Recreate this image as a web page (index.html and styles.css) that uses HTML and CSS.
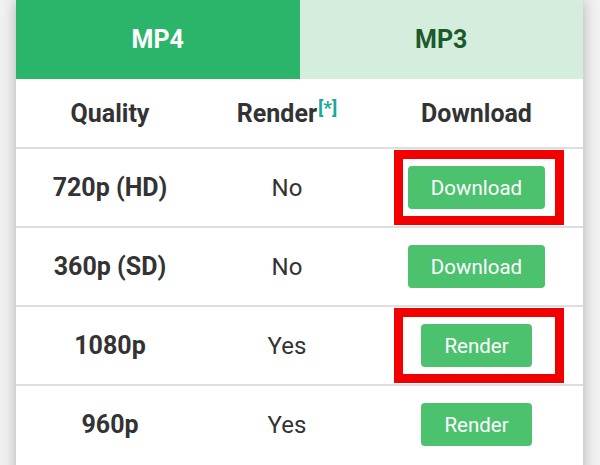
FILE: index.html
```html
<!DOCTYPE html>
<html>
<head>
<meta charset="utf-8">
<link rel="stylesheet" href="styles.css">
</head>
<body>
<div class="page">
  <div class="card">
    <div class="tabs">
      <div class="tab active">MP4</div>
      <div class="tab">MP3</div>
    </div>
    <div class="row head">
      <div class="cell">Quality</div>
      <div class="cell">Render<sup class="note">[*]</sup></div>
      <div class="cell">Download</div>
    </div>
    <div class="row">
      <div class="cell q">720p (HD)</div>
      <div class="cell r">No</div>
      <div class="cell d"><span class="btn">Download</span><span class="mark"></span></div>
    </div>
    <div class="row">
      <div class="cell q">360p (SD)</div>
      <div class="cell r">No</div>
      <div class="cell d"><span class="btn">Download</span></div>
    </div>
    <div class="row">
      <div class="cell q">1080p</div>
      <div class="cell r">Yes</div>
      <div class="cell d"><span class="btn">Render</span><span class="mark"></span></div>
    </div>
    <div class="row">
      <div class="cell q">960p</div>
      <div class="cell r">Yes</div>
      <div class="cell d"><span class="btn">Render</span></div>
    </div>
  </div>
</div>
</body>
</html>
```

FILE: styles.css
```css
html, body {
  margin: 0;
  padding: 0;
  background: #f2f2f2;
  height: 465px;
  overflow: hidden;
}
.page {
  padding: 0 17px 0 16px;
  font-family: Roboto, "Liberation Sans", sans-serif;
  color: #333;
}
.card {
  background: #fff;
  box-shadow: 0 0 14px rgba(0, 0, 0, 0.28);
  height: 480px;
}
.tabs {
  display: flex;
  height: 79px;
}
.tab {
  flex: 1;
  display: flex;
  align-items: center;
  justify-content: center;
  background: #d4eddc;
  color: #1c5a2b;
  font-weight: 700;
  font-size: 25px;
}
.tab.active {
  background: #2bb56a;
  color: #fff;
}
.row {
  display: grid;
  grid-template-columns: 188px 166px 1fr;
  align-items: center;
  height: 79px;
  box-sizing: border-box;
  border-top: 2px solid #dedede;
}
.row.head {
  height: 68px;
  border-top: none;
  font-weight: 700;
  font-size: 25px;
}
.cell {
  text-align: center;
  position: relative;
  height: 100%;
  display: flex;
  align-items: center;
  justify-content: center;
}
.note {
  color: #1aa99a;
  font-size: 19px;
  font-weight: 700;
  align-self: flex-start;
  margin-top: 17px;
  margin-left: 1px;
}
.q {
  font-weight: 700;
  font-size: 25px;
}
.r {
  font-size: 24px;
}
.btn {
  display: inline-flex;
  align-items: center;
  height: 43px;
  padding: 0 23px;
  background: #4cc26f;
  color: #fff;
  font-size: 20.5px;
  border-radius: 4px;
}
.mark {
  position: absolute;
  left: 24px;
  top: 1px;
  width: 170px;
  height: 75px;
  box-sizing: border-box;
  border: 9px solid #f20000;
}
```
